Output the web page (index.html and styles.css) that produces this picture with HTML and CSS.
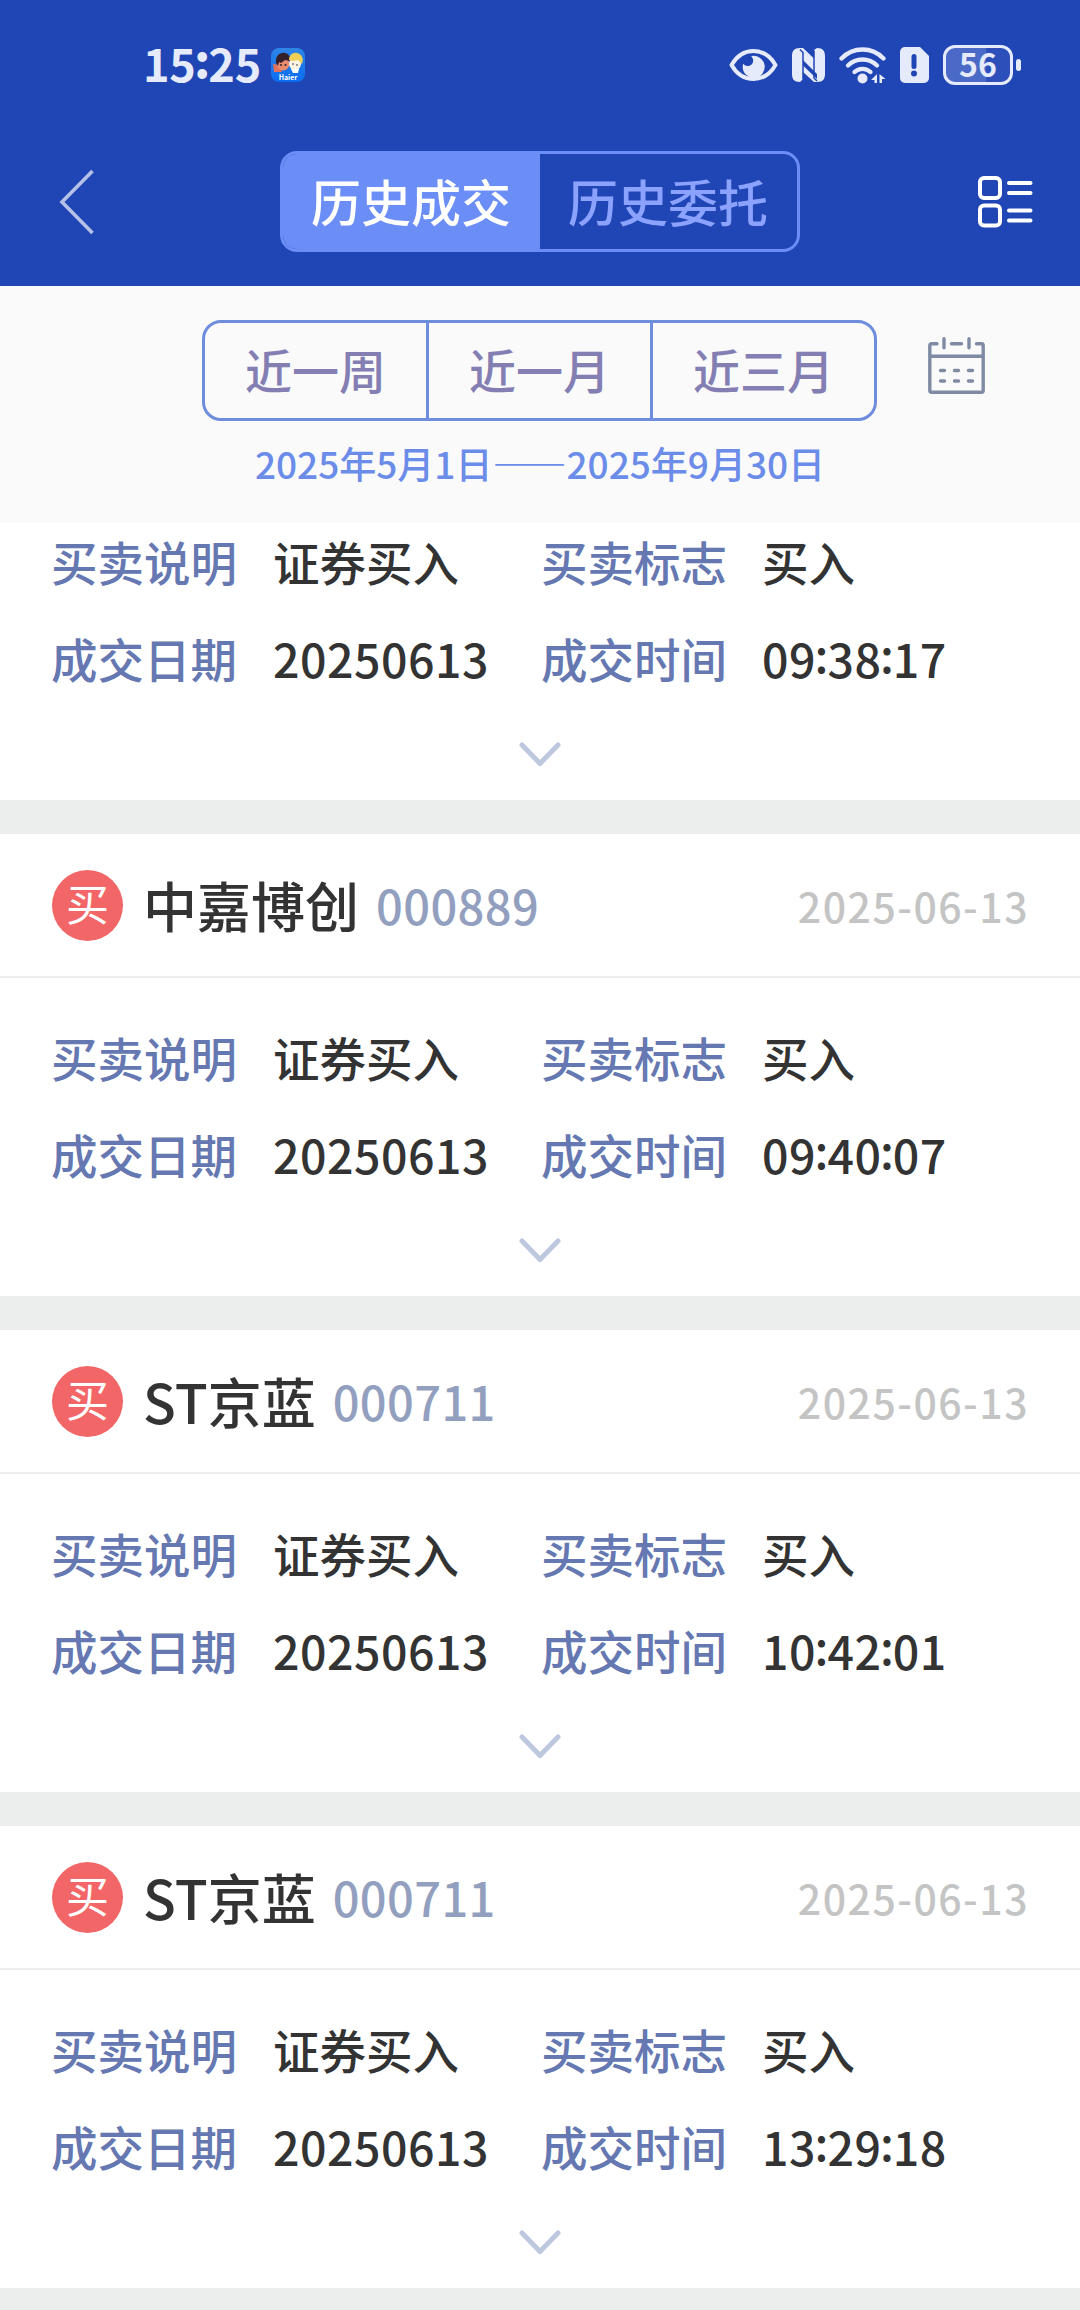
FILE: index.html
```html
<!DOCTYPE html>
<html lang="zh-CN">
<head>
<meta charset="utf-8">
<title>历史成交</title>
<link rel="stylesheet" href="styles.css">
</head>
<body>
<div class="screen">
  <header class="header">
    <div class="status">
      <span class="clock">15<b>:</b>25</span>
      <div class="app-icon">
        <svg width="34" height="34" viewBox="0 0 34 34">
          <defs><linearGradient id="sky" x1="0" y1="0" x2="0" y2="1"><stop offset="0" stop-color="#2f86e8"/><stop offset="1" stop-color="#0a6cf0"/></linearGradient></defs>
          <rect width="34" height="34" rx="8" fill="url(#sky)"/>
          <path d="M2 16l5 1 4 7H3z" fill="#e2705a"/>
          <circle cx="12" cy="16" r="6.500" fill="#e98a6e"/>
          <path d="M5 15c-1-7 4-11 9-10 4 1 6 4 5 8l-5-1-4 3-2-1-1 4z" fill="#33202b"/>
          <circle cx="24" cy="16" r="6" fill="#fff3e4"/>
          <path d="M18 12c0-5 4-8 8-7 5 1 7 6 5 11l-4-4-5 1z" fill="#f2cf55"/>
          <path d="M20 21h8l-1 4h-5z" fill="#fff"/>
          <circle cx="10" cy="17" r="1" fill="#33202b"/><circle cx="14.500" cy="17" r="1" fill="#33202b"/>
          <circle cx="22" cy="16" r=".8" fill="#33202b"/><circle cx="26" cy="17" r=".8" fill="#33202b"/>
        </svg>
        <span class="app-name">Haier</span>
      </div>
      <div class="status-icons">
        <svg class="i-eye" width="49" height="34" viewBox="0 0 49 34">
          <path d="M2.500 17C8 7.500 16 3 24.500 3S41 7.500 46.500 17C41 26.500 33 31 24.500 31S8 26.500 2.500 17z" fill="none" stroke="#e6ebfb" stroke-width="4" stroke-linejoin="round"/>
          <path d="M22 8.200a11 11 0 1 1-8.300 10.500c0-1 .2-2 .5-3a5.500 5.500 0 0 0 10-3.200c0-1.700-.9-3.300-2.200-4.300z" fill="#e6ebfb"/>
        </svg>
        <svg class="i-nfc" width="33" height="34" viewBox="0 0 33 34">
          <path d="M8 0v34C2 34 0 31 0 26V8C0 3 2 0 8 0zM25 0c6 0 8 3 8 8v18c0 5-2 8-8 8z" fill="#e6ebfb"/>
          <path d="M7 0h4l11 10.500V2l3-2v26L11 12v19l-3 3z" fill="#e6ebfb"/>
          <path d="M11 17.500L25 31v3h-3L11 24z" fill="#e6ebfb"/>
          <path d="M8 1.500l3 3v27M25 33l-3-3V2.500" stroke="#1f46b4" stroke-width="1.500" fill="none"/>
        </svg>
        <svg class="i-wifi" width="47" height="37" viewBox="0 0 47 37">
          <g fill="none" stroke="#e6ebfb" stroke-width="4.300" stroke-linecap="round">
            <path d="M2.500 11.500C14-.5 33-.5 44.500 11.500"/><path d="M9 18.500c8-8 21-8 29 0"/><path d="M15.500 25c4.500-4.300 11.500-4.300 16 0"/>
          </g>
          <circle cx="23.500" cy="31.500" r="5" fill="#e6ebfb"/>
          <path d="M38 27v9h-2.500v-3H32zM40.500 36v-9l6 5h-3.500v4z" fill="#e6ebfb"/>
        </svg>
        <svg class="i-sim" width="29" height="36" viewBox="0 0 29 36">
          <path d="M5 0h15l9 9v22a5 5 0 0 1-5 5H5a5 5 0 0 1-5-5V5a5 5 0 0 1 5-5z" fill="#e6ebfb"/>
          <path d="M14 9.500v10" stroke="#1f46b4" stroke-width="5" stroke-linecap="round"/><circle cx="14" cy="26.500" r="3" fill="#1f46b4"/>
        </svg>
        <div class="battery"><div class="battery-body"><span>56</span></div><i class="battery-nub"></i></div>
      </div>
    </div>
    <nav class="nav">
      <svg class="back" width="38" height="68" viewBox="0 0 38 68"><path d="M34.500 3L4 34l30.500 31" fill="none" stroke="#b5c1e8" stroke-width="3.600"/></svg>
      <div class="tabs"><span class="tab active">历史成交</span><span class="tab">历史委托</span></div>
      <svg class="list" width="55" height="52" viewBox="0 0 55 52">
        <g fill="none" stroke="#fff" stroke-width="4"><rect x="2" y="2" width="20" height="20" rx="4"/><rect x="2" y="29.500" width="20" height="20" rx="4"/>
        <path d="M31 7h21.500M31 17h21.500M31 34.500h21.500M31 44.500h21.500" stroke-linecap="round"/></g>
      </svg>
    </nav>
  </header>

  <section class="filter">
    <div class="filter-row">
      <div class="ranges"><span>近一周</span><span>近一月</span><span>近三月</span></div>
      <svg class="calendar" width="57" height="57" viewBox="0 0 57 57">
        <g fill="none" stroke="#7f8aa3" stroke-width="3.400" stroke-linecap="round" stroke-linejoin="round">
          <path d="M9 6.700H3.500a1.700 1.700 0 0 0-1.700 1.700V53.500a1.700 1.700 0 0 0 1.700 1.700h50a1.700 1.700 0 0 0 1.700-1.700V8.400a1.700 1.700 0 0 0-1.700-1.700H48.500M23.500 6.700h10M2 19.200h53M16 1.700v9M41 1.700v9"/>
          <path d="M12.500 33.500h4M26.500 33.500h4M40.500 33.500h4M12.500 44h4M26.500 44h4M40.500 44h4"/>
        </g>
      </svg>
    </div>
    <p class="period">2025年5月1日<span class="dash">——</span>2025年9月30日</p>
  </section>

  <main class="records">
    <article class="card partial">
      <dl class="fields">
        <dt>买卖说明</dt><dd>证券买入</dd><dt>买卖标志</dt><dd>买入</dd>
        <dt>成交日期</dt><dd class="num">20250613</dd><dt>成交时间</dt><dd class="num">09<b>:</b>38<b>:</b>17</dd>
      </dl>
      <svg class="chevron" width="42" height="26" viewBox="0 0 42 26"><path d="M3 3l18 18.500L39 3"/></svg>
    </article>

    <article class="card">
      <div class="card-head"><span class="badge">买</span><h2>中嘉博创</h2><span class="code">000889</span><time>2025-06-13</time></div>
      <dl class="fields">
        <dt>买卖说明</dt><dd>证券买入</dd><dt>买卖标志</dt><dd>买入</dd>
        <dt>成交日期</dt><dd class="num">20250613</dd><dt>成交时间</dt><dd class="num">09<b>:</b>40<b>:</b>07</dd>
      </dl>
      <svg class="chevron" width="42" height="26" viewBox="0 0 42 26"><path d="M3 3l18 18.500L39 3"/></svg>
    </article>

    <article class="card">
      <div class="card-head"><span class="badge">买</span><h2>ST京蓝</h2><span class="code">000711</span><time>2025-06-13</time></div>
      <dl class="fields">
        <dt>买卖说明</dt><dd>证券买入</dd><dt>买卖标志</dt><dd>买入</dd>
        <dt>成交日期</dt><dd class="num">20250613</dd><dt>成交时间</dt><dd class="num">10<b>:</b>42<b>:</b>01</dd>
      </dl>
      <svg class="chevron" width="42" height="26" viewBox="0 0 42 26"><path d="M3 3l18 18.500L39 3"/></svg>
    </article>

    <article class="card">
      <div class="card-head"><span class="badge">买</span><h2>ST京蓝</h2><span class="code">000711</span><time>2025-06-13</time></div>
      <dl class="fields">
        <dt>买卖说明</dt><dd>证券买入</dd><dt>买卖标志</dt><dd>买入</dd>
        <dt>成交日期</dt><dd class="num">20250613</dd><dt>成交时间</dt><dd class="num">13<b>:</b>29<b>:</b>18</dd>
      </dl>
      <svg class="chevron" width="42" height="26" viewBox="0 0 42 26"><path d="M3 3l18 18.500L39 3"/></svg>
    </article>
  </main>
</div>
</body>
</html>
```
FILE: styles.css
```css
* { box-sizing: border-box; margin: 0; padding: 0; }
body {
  width: 1080px;
  background: #eceeed;
  font-family: "Noto Sans CJK SC", sans-serif;
  font-weight: 500;
  color: #333;
}
svg { display: block; flex: none; }
.screen { width: 1080px; height: 2310px; overflow: hidden; background: #eceeed; }

/* Header */
.header { height: 286px; background: #1f46b4; }
.status { display: flex; align-items: center; height: 130px; padding: 0 59px 0 143px; }
.clock { width: 128px; padding-bottom: 5px; font-size: 45px; line-height: 60px; font-weight: 700; letter-spacing: -0.2px; color: #e6ebfb; }
.clock b { position: relative; top: -4px; margin: 0 -1.5px; }
.app-icon { position: relative; width: 34px; height: 34px; }
.app-name {
  position: absolute; left: 0; right: 0; bottom: 1px;
  font-size: 7px; line-height: 8px; font-weight: 700; text-align: center; color: #fff;
}
.status-icons { display: flex; align-items: center; gap: 14px; margin-left: auto; }
.battery { display: flex; align-items: center; gap: 3px; }
.battery-body {
  width: 70px; height: 40px; border: 3px solid #e6ebfb; border-radius: 12px;
  background: linear-gradient(90deg, #4b69c6 62%, #2c4fb9 62%);
  color: #e6ebfb; text-align: center; font-size: 32px; line-height: 31px; font-weight: 700;
}
.battery-nub { width: 5px; height: 12px; border-radius: 3px; background: #e6ebfb; }

.nav { display: flex; align-items: center; height: 144px; padding: 0 47px 0 58px; justify-content: space-between; }
.tabs { display: flex; width: 520px; height: 101px; border: 3px solid #6a8df6; border-radius: 17px; overflow: hidden; margin: -1px 0 0 5px; }
.tab { flex: 1; text-align: center; font-size: 50px; line-height: 92px; color: #8ba2ff; }
.tab.active { background: #6a8df6; color: #fff; }

/* Date range filter */
.filter { height: 237px; padding-top: 34px; background: #fafafb; }
.filter-row { display: flex; align-items: flex-start; padding-left: 202px; }
.ranges { display: flex; width: 675px; height: 101px; border: 3px solid #6f8ddd; border-radius: 19px; }
.ranges span { flex: 1; text-align: center; font-size: 47px; line-height: 92px; color: #847fb3; }
.ranges span + span { border-left: 3px solid #6f8ddd; }
.calendar { margin: 17px 0 0 51px; }
.period { margin-top: 15px; text-align: center; font-size: 37px; line-height: 54px; color: #6b8ce8; white-space: nowrap; }
.dash { font-weight: 700; }

/* Records */
.card { display: flow-root; height: 462px; margin-bottom: 34px; background: #fff; }
.card.partial { height: 277px; }
.card-head { display: flex; align-items: center; height: 144px; padding: 0 51px 0 52px; border-bottom: 2px solid #eceeed; }
.badge {
  width: 71px; height: 71px; margin-right: 20px; border-radius: 50%;
  background: #f26667; color: #fff; text-align: center; font-size: 43px; line-height: 65px; font-weight: 400;
}
.card-head h2 { font-size: 54px; font-weight: 500; line-height: 70px; }
.code { margin-left: 17px; font-size: 47px; line-height: 70px; letter-spacing: 0.4px; color: #939fbf; }
.card-head time { margin-left: auto; font-size: 41px; line-height: 70px; letter-spacing: 1.5px; color: #c4c4c4; }
.fields {
  display: grid; grid-template-columns: 222px 268px 221px 1fr; grid-auto-rows: 97px;
  padding: 30px 0 0 51px; font-size: 46.5px; line-height: 97px;
}
.partial .fields { padding-top: 0; margin-top: -11px; }
.fields dt { color: #6578b1; }
.num { letter-spacing: 0.5px; }
.num b { font-weight: 500; position: relative; top: -5px; margin: 0 -1.5px; }
.chevron { margin: 36px auto 0; }
.chevron path { fill: none; stroke: #bdc7dd; stroke-width: 5; stroke-linecap: round; stroke-linejoin: round; }
```
